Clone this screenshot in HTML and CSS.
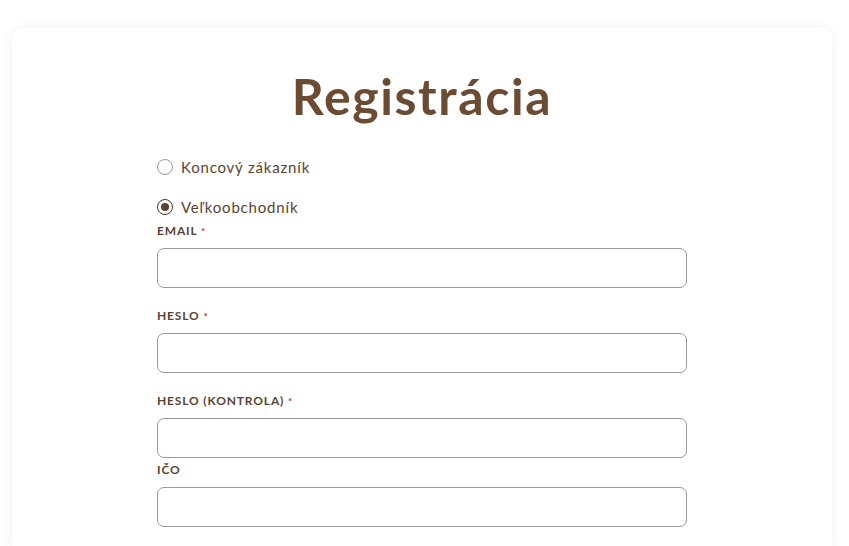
FILE: index.html
```html
<!DOCTYPE html>
<html lang="sk">
<head>
<meta charset="utf-8">
<title>Registrácia</title>
<link rel="stylesheet" href="styles.css">
</head>
<body>
<div class="card">
  <h1 class="title">Registrácia</h1>
  <form class="form">
    <label class="radio"><input type="radio" name="type"><span>Koncový zákazník</span></label>
    <label class="radio"><input type="radio" name="type" checked><span>Veľkoobchodník</span></label>
    <div class="field">
      <label class="lbl">EMAIL <span class="req">*</span></label>
      <input class="inp" type="text">
    </div>
    <div class="field">
      <label class="lbl">HESLO <span class="req">*</span></label>
      <input class="inp" type="password">
    </div>
    <div class="field tight">
      <label class="lbl">HESLO (KONTROLA) <span class="req">*</span></label>
      <input class="inp" type="password">
    </div>
    <div class="field">
      <label class="lbl">IČO</label>
      <input class="inp" type="text">
    </div>
  </form>
</div>
</body>
</html>
```
FILE: styles.css
```css
html, body {
  margin: 0;
  height: 546px;
  background: #fff;
  font-family: Lato, "Noto Sans", sans-serif;
  overflow: hidden;
}
.card {
  margin: 28px 17px 0 12px;
  background: #fff;
  border-radius: 10px;
  box-shadow: 0 0 12px rgba(0, 0, 0, 0.06);
  height: 530px;
  padding-top: 1px;
}
.title {
  margin: 37px 0 0;
  text-align: center;
  font-size: 50px;
  line-height: 60px;
  font-weight: 700;
  letter-spacing: 1.6px;
  color: #6b4c33;
}
.form {
  width: 530px;
  margin: 0 auto;
  padding-top: 29px;
  display: flex;
  flex-direction: column;
}
.radio {
  display: flex;
  align-items: center;
  gap: 8px;
  height: 24px;
  margin-bottom: 16px;
  font-size: 15px;
  color: #5b4330;
  letter-spacing: 0.8px;
}
.radio + .radio { margin-bottom: 3px; }
.radio input {
  appearance: none;
  -webkit-appearance: none;
  margin: 0;
  width: 16px;
  height: 16px;
  border: 1px solid #9a9a9a;
  border-radius: 50%;
  display: grid;
  place-items: center;
  box-sizing: border-box;
}
.radio input:checked {
  border-color: #4a3626;
}
.radio input:checked::after {
  content: "";
  width: 8px;
  height: 8px;
  border-radius: 50%;
  background: #5b4330;
}
.field {
  display: flex;
  flex-direction: column;
  margin-bottom: 19px;
}
.field.tight { margin-bottom: 3px; }
.lbl {
  font-size: 12px;
  line-height: 18px;
  font-weight: 700;
  letter-spacing: 0.85px;
  color: #5b4330;
  margin-bottom: 8px;
}
.req {
  color: #c0392b;
  font-size: 10px;
  vertical-align: top;
}
.inp {
  height: 40px;
  box-sizing: border-box;
  border: 1px solid #999;
  border-radius: 7px;
  margin: 0;
  padding: 0 12px;
  font: inherit;
  background: #fff;
}
```
